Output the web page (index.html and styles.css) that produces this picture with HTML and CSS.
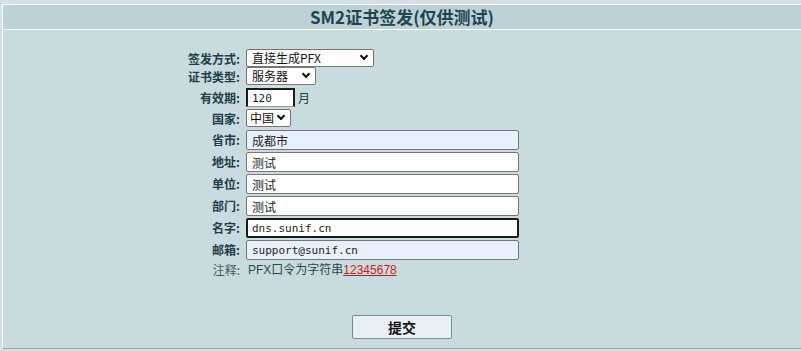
FILE: index.html
```html
<!DOCTYPE html>
<html>
<head>
    <title>SM2证书签发</title>
    <link rel="stylesheet" href="styles.css">
</head>
<body>
    <div class="panel">
        <div class="panel-head">SM2证书签发(仅供测试)</div>
        <div class="panel-body">
            <form class="form">
                <label class="lbl">签发方式:</label>
                <div><span class="sel-wrap"><select class="sel sel-mode"><option>直接生成PFX</option></select></span></div>

                <label class="lbl">证书类型:</label>
                <div><span class="sel-wrap"><select class="sel sel-type"><option>服务器</option></select></span></div>

                <label class="lbl">有效期:</label>
                <div class="inline"><input class="txt txt-num mono" value="120"><span class="unit">月</span></div>

                <label class="lbl">国家:</label>
                <div><span class="sel-wrap"><select class="sel sel-country"><option>中国</option></select></span></div>

                <label class="lbl">省市:</label>
                <div><input class="txt filled" value="成都市"></div>

                <label class="lbl">地址:</label>
                <div><input class="txt" value="测试"></div>

                <label class="lbl">单位:</label>
                <div><input class="txt" value="测试"></div>

                <label class="lbl">部门:</label>
                <div><input class="txt" value="测试"></div>

                <label class="lbl">名字:</label>
                <div><input class="txt mono focused" value="dns.sunif.cn"></div>

                <label class="lbl">邮箱:</label>
                <div><input class="txt mono filled" value="support@sunif.cn"></div>

                <span class="lbl note-lbl">注释:</span>
                <div class="note">PFX口令为字符串<a class="pwd" href="#">12345678</a></div>
            </form>
            <div class="actions">
                <button class="submit" type="button">提交</button>
            </div>
        </div>
    </div>
</body>
</html>
```

FILE: styles.css
```css
html, body {
    margin: 0;
    background-color: #d4e1ea;
    overflow: hidden;
}

body {
    padding: 4px 0 0 2px;
    font-family: "Liberation Sans", "Noto Sans CJK SC", sans-serif;
    font-size: 12px;
    color: #1e3e48;
}

.panel {
    border-top: 1px solid #ffffff;
    border-left: 1px solid #ffffff;
    border-bottom: 1px solid #9aa6ab;
}

.panel-head {
    height: 24px;
    line-height: 24px;
    background-color: #bdd1d9;
    border-bottom: 1px solid #ffffff;
    text-align: center;
    font-family: "Noto Sans CJK SC", sans-serif;
    font-size: 17px;
    font-weight: bold;
    color: #1c474d;
}

.panel-body {
    box-sizing: border-box;
    height: 318px;
    padding-top: 19px;
    background-color: #c8dcdf;
}

.form {
    display: grid;
    grid-template-columns: 71px auto;
    grid-template-rows: 18px 21px 21px 21px repeat(6, 22px) 16px;
    column-gap: 5px;
    align-items: start;
    margin-left: 167px;
}

.lbl {
    padding-right: 1px;
    text-align: right;
    font-family: "Noto Sans CJK SC", sans-serif;
    font-weight: bold;
    line-height: 19px;
    color: #1e3e48;
}

.sel-wrap {
    position: relative;
    display: inline-block;
}

/* chevron drawn over the native select */
.sel-wrap::after {
    content: "";
    position: absolute;
    right: 7px;
    top: 4px;
    width: 4px;
    height: 4px;
    border-right: 2px solid #111;
    border-bottom: 2px solid #111;
    transform: rotate(45deg);
    pointer-events: none;
}

.sel {
    display: block;
    box-sizing: border-box;
    height: 18px;
    padding: 0 0 0 5px;
    border: 1px solid #767676;
    border-radius: 2px;
    background-color: #ffffff;
    font-family: "Noto Sans CJK SC", sans-serif;
    font-size: 12px;
    line-height: 16px;
    color: #111;
    appearance: none;
    -webkit-appearance: none;
}

.sel-mode { width: 128px; }
.sel-type { width: 70px; }
.sel-country { width: 45px; padding-left: 3px; }

.txt {
    box-sizing: border-box;
    width: 273px;
    height: 20px;
    padding: 0 5px;
    border: 1px solid #767676;
    border-radius: 2px;
    background-color: #ffffff;
    font-family: "Noto Sans CJK SC", sans-serif;
    font-size: 12px;
    color: #222;
    outline: none;
}

.mono {
    font-family: "DejaVu Sans Mono", monospace;
    font-size: 11px;
}

.filled {
    background-color: #e8f0fe;
}

.focused {
    border: 2px solid #1b1b1b;
    padding: 0 4px;
}

.inline {
    display: flex;
    align-items: center;
    gap: 3px;
}

.txt-num {
    width: 49px;
    height: 19px;
    padding: 0 4px;
    border: 2px solid #1b1b1b;
    border-bottom: 1px solid #9a9a9a;
    border-radius: 0;
}

.unit {
    color: #1e3e48;
    font-family: "Noto Sans CJK SC", sans-serif;
}

.note-lbl {
    font-weight: normal;
    line-height: 16px;
    color: #3c5c64;
}

.note {
    padding-left: 2px;
    line-height: 16px;
    color: #2a4850;
}

.pwd {
    color: #d01818;
    text-decoration: underline;
}

.actions {
    display: flex;
    justify-content: center;
    margin-top: 37px;
}

.submit {
    width: 100px;
    height: 24px;
    border: 1px solid #6f8ea0;
    border-radius: 2px;
    background-color: #e8eff5;
    font-family: "Noto Sans CJK SC", sans-serif;
    font-size: 14px;
    font-weight: bold;
    color: #111;
    cursor: pointer;
}
```
